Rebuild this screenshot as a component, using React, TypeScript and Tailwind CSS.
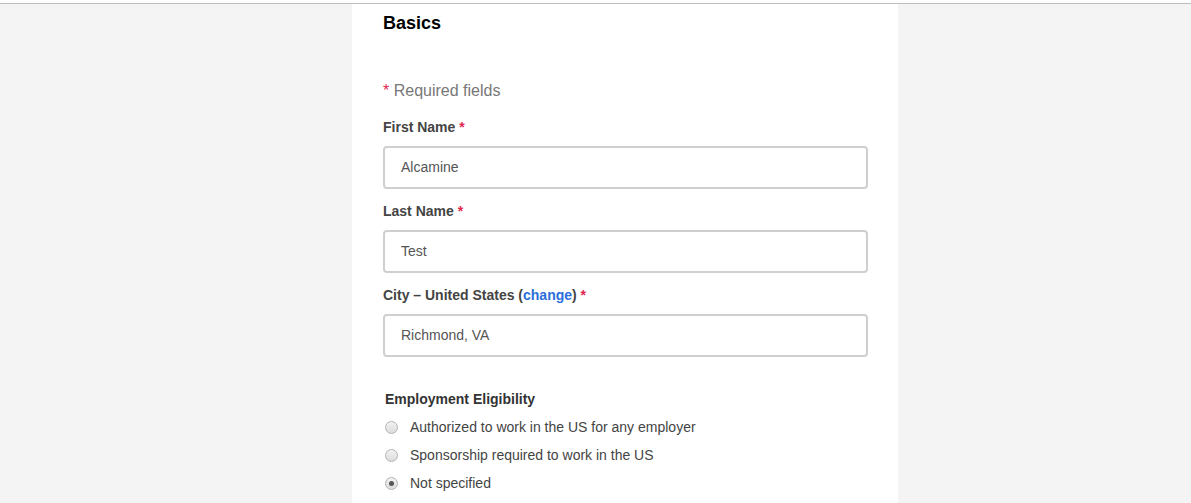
import React from "react";

const fields = [
  { label: "First Name", value: "Alcamine" },
  { label: "Last Name", value: "Test" },
];

const options = [
  { label: "Authorized to work in the US for any employer", checked: false },
  { label: "Sponsorship required to work in the US", checked: false },
  { label: "Not specified", checked: true },
];

function Radio({ checked }: { checked: boolean }) {
  return (
    <span className="flex h-[13px] w-[13px] items-center justify-center rounded-full border border-[#b4b4b4] bg-gradient-to-b from-[#f2f2f2] to-[#dcdcdc]">
      {checked && <span className="h-[5px] w-[5px] rounded-full bg-[#555]" />}
    </span>
  );
}

function Input({ value }: { value: string }) {
  return (
    <div className="flex h-[43px] w-[485px] items-center rounded-[4px] border-2 border-[#cfcfcf] bg-white pl-[16px] text-[14px] text-[#555]">
      {value}
    </div>
  );
}

export default function App() {
  return (
    <div className="min-h-[503px] bg-[#f4f4f4] font-['Liberation_Sans',Arial,sans-serif]">
      <div className="h-[3px] bg-white" />
      <div className="h-px bg-[#bdbdbd]" />
      <div className="ml-[352px] flex min-h-[499px] w-[546px] flex-col bg-white pl-[31px] pt-[9px]">
        <h2 className="text-[18px] font-bold leading-[20px] text-black">Basics</h2>

        <p className="mt-[49px] text-[16px] leading-[18px] text-[#777]">
          <span className="text-[#e0284f]">*</span> Required fields
        </p>

        {fields.map((f, i) => (
          <div key={f.label} className={i === 0 ? "mt-[19px]" : "mt-[14px]"}>
            <label className="block text-[14px] font-bold leading-[16px] text-[#444]">
              {f.label} <span className="text-[#e0284f]">*</span>
            </label>
            <div className="mt-[11px]">
              <Input value={f.value} />
            </div>
          </div>
        ))}

        <div className="mt-[14px]">
          <label className="block text-[14px] font-bold leading-[16px] text-[#444]">
            City – United States (<span className="text-[#2a6fdb]">change</span>){" "}
            <span className="text-[#e0284f]">*</span>
          </label>
          <div className="mt-[11px]">
            <Input value="Richmond, VA" />
          </div>
        </div>

        <div className="mt-[34px] pl-[2px]">
          <div className="text-[14px] font-bold leading-[16px] text-[#333]">Employment Eligibility</div>
          <div className="mt-[12px] flex flex-col gap-[12px]">
            {options.map((o) => (
              <div key={o.label} className="flex items-center gap-[12px] text-[14px] leading-[16px] text-[#444]">
                <Radio checked={o.checked} />
                <span>{o.label}</span>
              </div>
            ))}
          </div>
        </div>
      </div>
    </div>
  );
}
